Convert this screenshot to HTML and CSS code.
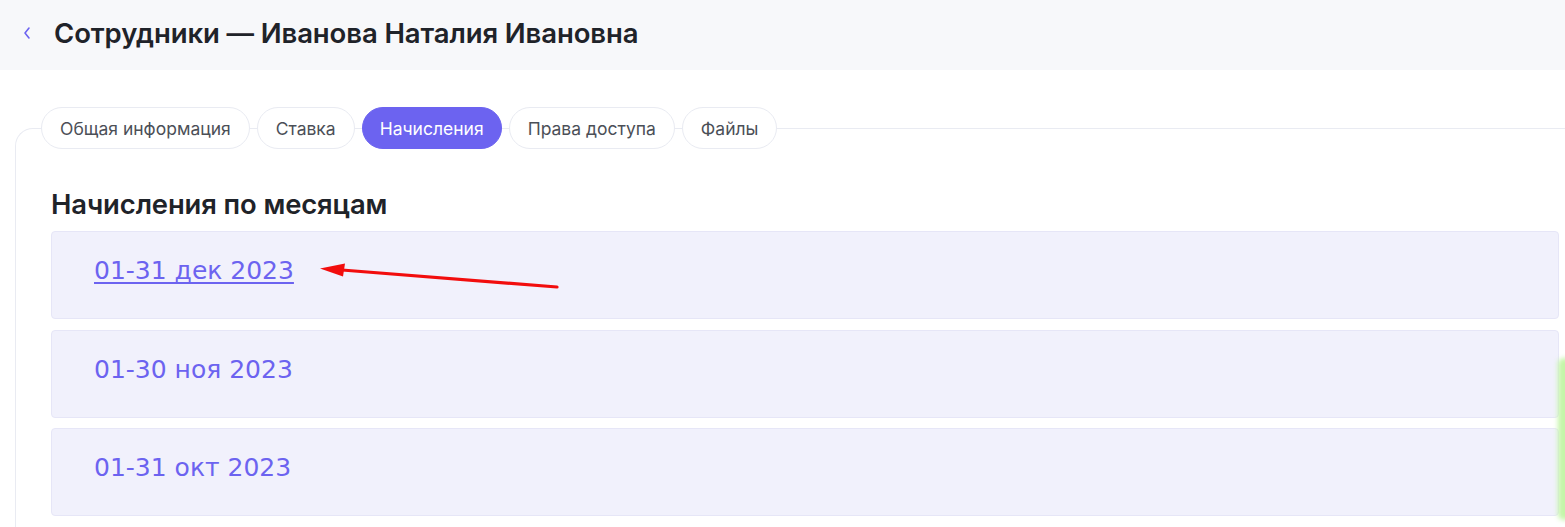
FILE: index.html
```html
<!DOCTYPE html>
<html lang="ru">
<head>
<meta charset="utf-8">
<title>Сотрудники — Иванова Наталия Ивановна</title>
<link rel="stylesheet" href="styles.css">
</head>
<body>
<header class="topbar">
  <a class="back" href="#" aria-label="Назад">
    <svg width="10" height="14" viewBox="0 0 10 14"><path d="M7 2 L3 7 L7 12" fill="none" stroke="#6c63f0" stroke-width="1.6" stroke-linecap="round" stroke-linejoin="round"/></svg>
  </a>
  <h1 class="title">Сотрудники — Иванова Наталия Ивановна</h1>
</header>
<main class="page">
  <section class="card">
    <nav class="tabs">
      <a class="tab" href="#">Общая информация</a>
      <a class="tab" href="#">Ставка</a>
      <a class="tab active" href="#">Начисления</a>
      <a class="tab" href="#">Права доступа</a>
      <a class="tab" href="#">Файлы</a>
    </nav>
    <h2 class="heading">Начисления по месяцам</h2>
    <div class="list">
      <div class="row"><a class="month hover" href="#">01-31 дек 2023</a></div>
      <div class="row"><a class="month" href="#">01-30 ноя 2023</a></div>
      <div class="row"><a class="month" href="#">01-31 окт 2023</a></div>
    </div>
  </section>
</main>
<svg class="arrow" width="260" height="40" viewBox="0 0 260 40">
  <line x1="237" y1="26" x2="22" y2="9" stroke="#f20d0d" stroke-width="3.2" stroke-linecap="round"/>
  <polygon points="0,7.5 25,2.5 23,15.5" fill="#f20d0d"/>
</svg>
<div class="glow"></div>
</body>
</html>
```
FILE: styles.css
```css
* { box-sizing: border-box; }
html, body { margin: 0; padding: 0; background: #fff; overflow: hidden; }
body { font-family: Inter, "Noto Sans", sans-serif; color: #1f2329; width: 1565px; height: 527px; position: relative; }

.topbar {
  height: 70px;
  background: #f7f8fa;
  display: flex;
  align-items: center;
  padding-left: 22px;
  padding-bottom: 5px;
}
.back { display: flex; width: 10px; height: 14px; margin-right: 22px; margin-top: 1px; }
.title { margin: 0; font-size: 27.5px; font-weight: 600; letter-spacing: -0.1px; color: #1f2329; line-height: 34px; }

.page { padding-top: 58px; padding-left: 15px; }
.card {
  border-top: 1px solid #e9ebf2;
  border-left: 1px solid #e9ebf2;
  border-top-left-radius: 18px;
  padding: 0 6px 0 35px;
  min-height: 420px;
}
.tabs { display: flex; gap: 7px; margin: -22px 0 0 -10px; }
.tab {
  height: 42px;
  display: flex;
  align-items: center;
  padding: 0 18px;
  border: 1px solid #e9ebf2;
  border-radius: 21px;
  background: #fff;
  color: #4b4f57;
  text-decoration: none;
  font-size: 17.5px;
}
.tab.active { background: #6c63f0; border-color: #6c63f0; color: #fff; padding: 0 17px; }

.heading { margin: 39px 0 0 0; font-size: 27.4px; font-weight: 600; line-height: 32px; color: #1f2329; letter-spacing: -0.1px; }
.list { display: flex; flex-direction: column; gap: 10.5px; margin-top: 11px; }
.row {
  height: 88px;
  background: #f1f1fc;
  border: 1px solid #e6e6f7;
  border-radius: 4px;
  padding: 23px 42px 0;
}
.month {
  font-family: "DejaVu Sans", Verdana, sans-serif;
  font-size: 25px;
  line-height: 32px;
  color: #6c63f0;
  text-decoration: none;
}
.month.hover { text-decoration: underline; text-decoration-thickness: 2px; text-underline-offset: 3px; }

.arrow { position: absolute; left: 320px; top: 261px; }
.glow {
  position: absolute;
  left: 1558px; top: 358px;
  width: 14px; height: 162px;
  background: #c4f5a8;
  filter: blur(2.5px);
  border-radius: 6px;
}
```
